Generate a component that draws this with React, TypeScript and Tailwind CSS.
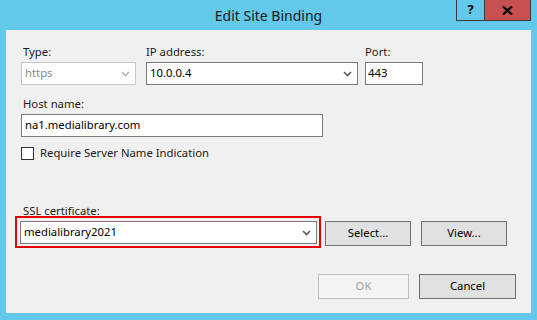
import React from "react";

const Chevron = ({ disabled }: { disabled?: boolean }) => (
  <svg width="9" height="6" viewBox="0 0 9 6" className="shrink-0">
    <path
      d="M1 1 L4.5 4.5 L8 1"
      fill="none"
      stroke={disabled ? "#b4b4b4" : "#5a5a5a"}
      strokeWidth="1.6"
    />
  </svg>
);

const Select = ({ value, disabled, className }: { value: string; disabled?: boolean; className: string }) => (
  <div
    className={`flex items-center justify-between h-[23px] bg-white border pl-[3px] pr-[5px] ${
      disabled ? "border-[#c8c8c8] text-[#8a8a8a]" : "border-[#7a7a7a] text-black"
    } ${className}`}
  >
    <span>{value}</span>
    <Chevron disabled={disabled} />
  </div>
);

const Button = ({ label, disabled, className }: { label: string; disabled?: boolean; className: string }) => (
  <div
    className={`flex items-center justify-center h-[25px] border ${
      disabled ? "bg-[#f4f4f4] border-[#bfbfbf] text-[#a0a0a0]" : "bg-[#e1e1e1] border-[#707070] text-black"
    } ${className}`}
  >
    {label}
  </div>
);

export default function App() {
  return (
    <div
      className="w-[537px] h-[320px] bg-[#63c9ea] flex flex-col text-[11.3px] text-[#1a1a1a]"
      style={{ fontFamily: '"Noto Sans", "Open Sans", sans-serif' }}
    >
      {/* Title bar */}
      <div className="relative h-[30px] shrink-0 flex items-center justify-center">
        <span className="text-[14px] text-[#1b1b1b] mt-[1px]">Edit Site Binding</span>
        <div className="absolute top-0 right-[6px] flex h-[21px]">
          <div className="w-[29px] h-full border border-[#3c3c3c] border-t-0 flex items-center justify-center font-bold text-[13px] text-black">
            ?
          </div>
          <div className="w-[46px] h-full bg-[#c75050] border border-l-0 border-t-0 border-[#3c3c3c] flex items-center justify-center">
            <svg width="11" height="9" viewBox="0 0 11 9">
              <path d="M1 0.5 L10 8.5 M10 0.5 L1 8.5" stroke="#000" strokeWidth="2.2" />
            </svg>
          </div>
        </div>
      </div>

      {/* Client area */}
      <div className="mx-[6px] w-[525px] h-[283px] bg-[#f0f0f0] pl-[15px] pt-[14px] flex flex-col">
        <div className="flex items-start">
          <div className="flex flex-col w-[115px]">
            <span className="pl-[2px] h-[16px] leading-[16px]">Type:</span>
            <Select value="https" disabled className="mt-[2px] w-[115px]" />
          </div>
          <div className="flex flex-col ml-[10px] w-[212px]">
            <span className="h-[16px] leading-[16px]">IP address:</span>
            <Select value="10.0.0.4" className="mt-[2px] w-[212px]" />
          </div>
          <div className="flex flex-col ml-[7px] w-[58px]">
            <span className="h-[16px] leading-[16px]">Port:</span>
            <div className="mt-[2px] h-[23px] w-[58px] bg-white border border-[#7a7a7a] pl-[2px] flex items-center text-black">
              443
            </div>
          </div>
        </div>

        <span className="pl-[2px] mt-[11px] h-[16px] leading-[16px]">Host name:</span>
        <div className="mt-[2px] h-[23px] w-[302px] bg-white border border-[#7a7a7a] pl-[3px] flex items-center text-black">
          na1.medialibrary.com
        </div>

        <div className="flex items-center mt-[8px] h-[16px]">
          <div className="w-[13px] h-[13px] bg-white border border-[#333333]" />
          <span className="ml-[6px]">Require Server Name Indication</span>
        </div>

        <span className="pl-[2px] mt-[42px] h-[16px] leading-[16px]">SSL certificate:</span>
        <div className="flex items-start -ml-[6px] mt-[-3px]">
          <div className="w-[306px] h-[32px] border-2 border-[#e60000] p-[3px]">
            <Select value="medialibrary2021" className="w-[297px] h-[22px]" />
          </div>
          <Button label="Select..." className="ml-[4px] mt-[5px] w-[86px]" />
          <Button label="View..." className="ml-[10px] mt-[5px] w-[86px]" />
        </div>

        <div className="flex mt-[26px] pl-[297px]">
          <Button label="OK" disabled className="w-[91px]" />
          <Button label="Cancel" className="ml-[10px] w-[97px]" />
        </div>
      </div>
    </div>
  );
}
